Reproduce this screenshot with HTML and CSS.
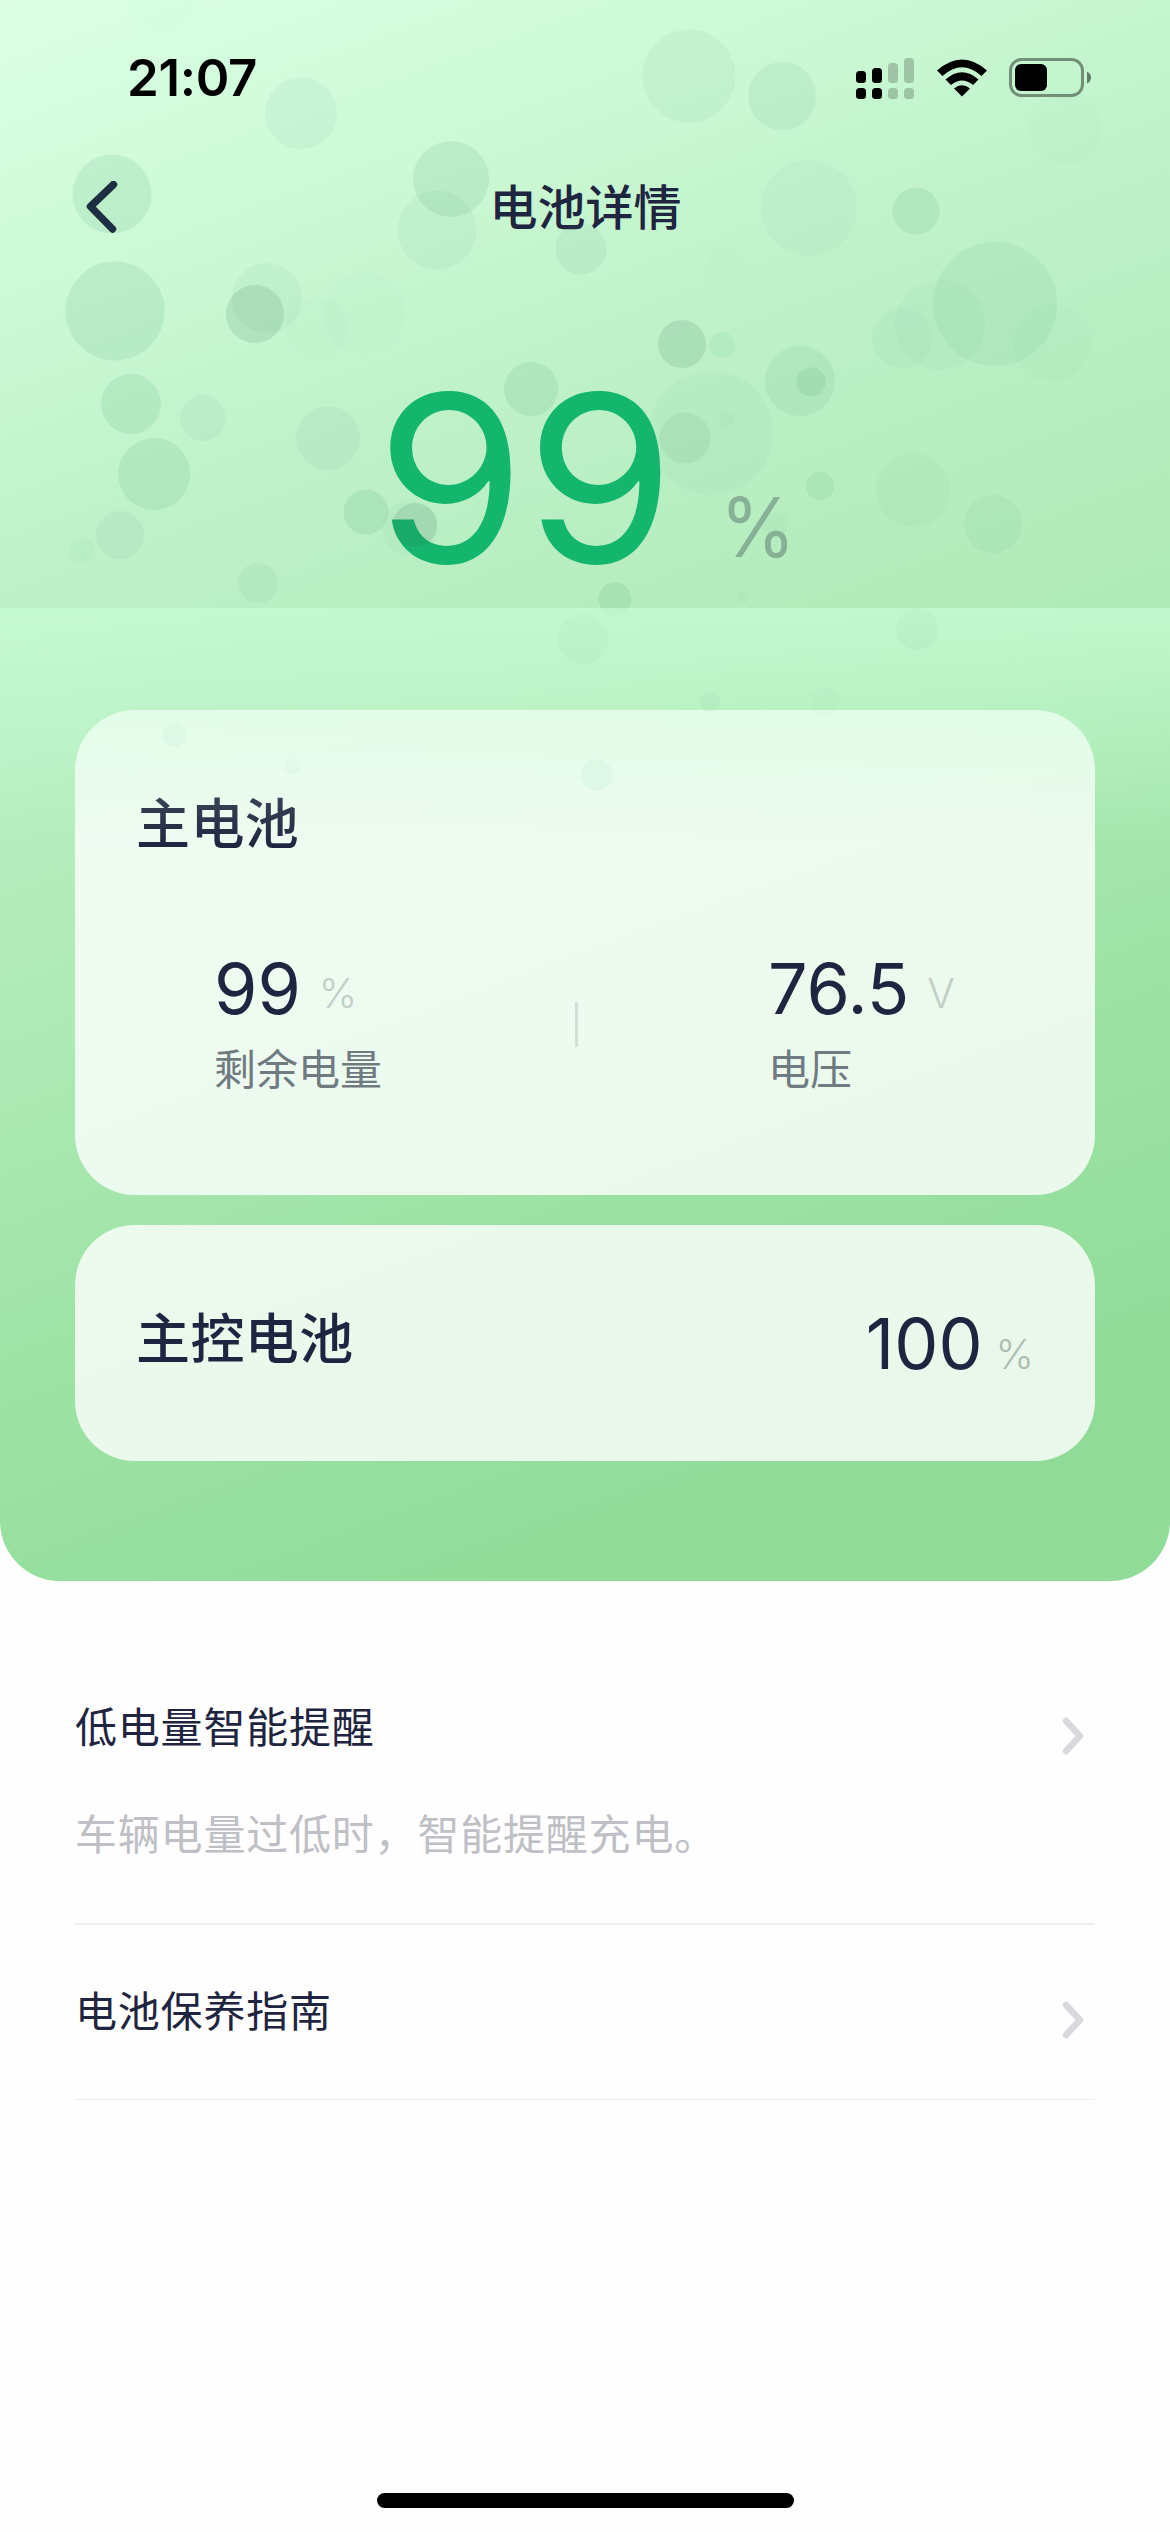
FILE: index.html
```html
<!DOCTYPE html>
<html lang="zh-CN">
<head>
<meta charset="utf-8">
<title>电池详情</title>
<link rel="stylesheet" href="styles.css">
</head>
<body>
<div class="screen">
  <section class="panel">
    <header class="status">
      <span class="time">21:07</span>
      <div class="status-icons">
        <svg class="signal" width="58" height="41" viewBox="0 0 58 41">
          <rect x="0" y="13" width="10" height="12" rx="3.5"/><rect x="16" y="10" width="10" height="15" rx="3.5"/>
          <rect x="0" y="30" width="10" height="11" rx="3.5"/><rect x="16" y="30" width="10" height="11" rx="3.5"/>
          <g opacity=".2"><rect x="32" y="5" width="10" height="20" rx="3.5"/><rect x="48" y="0" width="10" height="25" rx="3.5"/>
          <rect x="32" y="30" width="10" height="11" rx="3.5"/><rect x="48" y="30" width="10" height="11" rx="3.5"/></g>
        </svg>
        <svg class="wifi" width="52" height="38" viewBox="0 0 52 38">
          <path d="M1 11.5Q26-10.500 51 11.500L45.500 17Q26-.5 6.500 17Z"/>
          <path d="M9.500 20.500Q26 6 42.500 20.500L37 26Q26 17 15 26Z"/>
          <path d="M18 29.500Q26 23 34 29.500L26 37.500Z"/>
        </svg>
        <svg class="battery" width="84" height="40" viewBox="0 0 84 40">
          <rect x="1.500" y="1.500" width="72" height="36" rx="11" fill="none" stroke="#000" stroke-opacity=".42" stroke-width="3"/>
          <rect x="6" y="6" width="32" height="27" rx="6"/>
          <path d="M78 13.500Q82 15.500 82 19.500Q82 23.500 78 25.500Z" opacity=".5"/>
        </svg>
      </div>
    </header>
    <nav class="nav">
      <svg class="back" width="32" height="52" viewBox="0 0 32 52"><path d="M27.500 3.500L4.500 25.500L26.500 48" fill="none" stroke="#1f2540" stroke-width="7.500" stroke-linecap="round" stroke-linejoin="round"/></svg>
      <h1 class="title">电池详情</h1>
    </nav>
    <div class="hero"><span class="level">99</span><span class="level-unit">%</span></div>
    <div class="cards">
      <article class="card card-main">
        <h2 class="card-title">主电池</h2>
        <div class="metrics">
          <div class="metric">
            <div class="reading"><span class="value">99</span><span class="unit">%</span></div>
            <div class="label">剩余电量</div>
          </div>
          <i class="separator"></i>
          <div class="metric metric-voltage">
            <div class="reading"><span class="value">76.5</span><span class="unit">V</span></div>
            <div class="label">电压</div>
          </div>
        </div>
      </article>
      <article class="card card-control">
        <h2 class="card-title">主控电池</h2>
        <div class="reading"><span class="value">100</span><span class="unit">%</span></div>
      </article>
    </div>
    <svg class="bubbles" width="1170" height="850" viewBox="0 0 1170 850">
      <g fill="#258a5c" fill-opacity=".1">
        <circle cx="112" cy="194" r="39.500"/><circle cx="115" cy="311" r="49.500"/>
        <circle cx="451" cy="179" r="38"/><circle cx="531" cy="389" r="27"/>
        <circle cx="131" cy="404" r="30"/><circle cx="154" cy="474" r="36"/>
        <circle cx="366" cy="512" r="22.500"/><circle cx="916" cy="211" r="23.500"/>
        <circle cx="995" cy="304" r="62" fill-opacity=".07"/><circle cx="800" cy="381" r="35" fill-opacity=".08"/>
        <circle cx="811" cy="382" r="14.500"/><circle cx="615" cy="599" r="16.500"/>
        <circle cx="820" cy="486" r="14" fill-opacity=".08"/>
      </g>
      <g fill="#4b8f78" fill-opacity=".06">
        <circle cx="301" cy="113" r="36"/><circle cx="437" cy="230" r="39.500"/>
        <circle cx="267" cy="298" r="35"/><circle cx="581" cy="249" r="25.500" fill-opacity=".08"/>
        <circle cx="203" cy="418" r="23"/><circle cx="328" cy="438" r="32"/>
        <circle cx="120" cy="535" r="24"/><circle cx="258" cy="583" r="20"/>
        <circle cx="689" cy="76" r="46.500"/><circle cx="782" cy="96" r="34" fill-opacity=".09"/>
        <circle cx="993" cy="524" r="29"/><circle cx="917" cy="629" r="21" fill-opacity=".12"/>
        <circle cx="710" cy="702" r="10" fill-opacity=".1"/><circle cx="583" cy="639" r="25" fill-opacity=".1"/>
      </g>
      <g fill="#3ca583" fill-opacity=".045">
        <circle cx="809" cy="208" r="48"/><circle cx="940" cy="325" r="45"/><circle cx="902" cy="338" r="30"/>
        <circle cx="1052" cy="343" r="39" fill-opacity=".025"/><circle cx="711" cy="433" r="62"/>
        <circle cx="722" cy="345" r="13" fill-opacity=".07"/><circle cx="727" cy="420" r="7"/>
        <circle cx="913" cy="490" r="37"/><circle cx="775" cy="525" r="13"/><circle cx="743" cy="597" r="6"/>
        <circle cx="82" cy="550" r="13"/><circle cx="410" cy="528" r="28"/><circle cx="825" cy="702" r="14"/>
        <circle cx="1065" cy="128" r="37" fill-opacity=".02"/><circle cx="317" cy="328" r="31" fill-opacity=".02"/>
        <circle cx="364" cy="313" r="41" fill-opacity=".02"/><circle cx="726" cy="267" r="20" fill-opacity=".015"/>
        <circle cx="161" cy="-3" r="36" fill-opacity=".015"/>
        <circle cx="174" cy="735" r="12" fill-opacity=".06"/><circle cx="293" cy="767" r="8"/><circle cx="597" cy="775" r="16" fill-opacity=".06"/>
      </g>
      <g fill="#356f55" fill-opacity=".14">
        <circle cx="255" cy="314" r="29"/><circle cx="682" cy="344" r="24"/>
        <circle cx="415" cy="525" r="22"/><circle cx="685" cy="438" r="25.500" fill-opacity=".08"/>
      </g>
    </svg>
    <div class="veil"></div>
  </section>
  <main class="list">
    <a class="row row-reminder">
      <span class="row-text"><span class="row-title">低电量智能提醒</span><span class="row-note">车辆电量过低时，智能提醒充电。</span></span>
      <svg class="chevron" width="22" height="38" viewBox="0 0 22 38"><path d="M4 4L18 19L4 34"/></svg>
    </a>
    <a class="row row-guide">
      <span class="row-text"><span class="row-title">电池保养指南</span></span>
      <svg class="chevron" width="22" height="38" viewBox="0 0 22 38"><path d="M4 4L18 19L4 34"/></svg>
    </a>
  </main>
  <div class="home-bar"></div>
</div>
</body>
</html>
```
FILE: styles.css
```css
* { box-sizing: border-box; }
body { margin: 0; background: #fff; font-family: Inter, "Noto Sans CJK SC", sans-serif; color: #1f2540; }
h1, h2 { margin: 0; font-weight: 500; }
.screen { width: 1170px; height: 2532px; display: flex; flex-direction: column; overflow: hidden; background: #fefefe; }
.panel {
  position: relative; height: 1581px; flex: none; overflow: hidden; border-radius: 0 0 60px 60px;
  background: linear-gradient(160deg, #dcffe6 0%, #d0fbda 11%, #c6f6d0 21%, #bdf0c7 31%, #afeab6 51%, #9ce2a4 71%, #90db98 90%);
}
.status { height: 156px; padding: 0 77px 0 127px; display: flex; align-items: center; justify-content: space-between; }
.time { font-size: 51px; font-weight: 600; line-height: 60px; color: #000; letter-spacing: -.3px; }
.status-icons { display: flex; align-items: center; }
.wifi { margin-left: 22px; }
.battery { margin-left: 21px; }
.nav { height: 102px; padding-left: 86px; display: grid; grid-template-columns: 32px 1fr; align-items: center; }
.title { padding: 2px 117px 0 0; font-size: 48px; line-height: 60px; text-align: center; }
.hero { height: 452px; padding: 104px 0 0 376px; display: flex; align-items: flex-start; }
.level { width: 344px; font-size: 233px; line-height: 233px; color: #14b56d; letter-spacing: 1px; transform: scaleX(1.03); transform-origin: left; }
.level-unit { margin-top: 116px; font-size: 82px; line-height: 100px; color: #87b196; font-weight: 400; letter-spacing: 0; transform: scaleX(.94); transform-origin: left; }
.cards { margin: 0 75px; display: flex; flex-direction: column; gap: 30px; }
.card { border-radius: 60px; background: rgba(255, 255, 255, .8); }
.card-title { font-size: 54px; line-height: 70px; letter-spacing: .4px; }
.card-main { height: 485px; padding: 80px 61px 0; }
.metrics { margin-top: 89px; padding-left: 78px; display: flex; align-items: flex-start; }
.metric { flex: none; width: 361px; }
.metric-voltage { width: auto; margin-left: 190px; }
.reading { display: flex; align-items: baseline; }
.value { font-size: 70px; line-height: 80px; letter-spacing: 0; }
.unit { margin-left: 18px; padding-bottom: 4px; font-size: 41px; font-weight: 300; color: #c2cfc6; }
.metric .reading { align-items: flex-end; height: 80px; }
.metric .unit { line-height: 60px; padding-bottom: 6px; }
.label { margin-top: 11px; font-size: 42px; line-height: 60px; color: #6f7b80; }
.separator { flex: none; width: 3px; height: 45px; margin-top: 53px; background: #d3dfd8; }
.card-control { height: 236px; padding: 0 61px; display: flex; align-items: center; justify-content: space-between; }
.card-control .card-title { margin-bottom: 6px; }
.card-control .reading { margin-top: 2px; }
.card-control .unit { margin-left: 13px; color: #aebdb4; }
.bubbles { position: absolute; left: 0; top: 0; }
.veil { position: absolute; left: 0; right: 0; top: 608px; height: 240px; background: linear-gradient(rgba(202, 255, 216, .65), rgba(202, 255, 216, 0)); }
.list { flex: 1; padding: 0 75px; }
.row { display: flex; justify-content: space-between; border-bottom: 2px solid #eeeef0; }
.row-text { display: flex; flex-direction: column; font-size: 42px; line-height: 60px; letter-spacing: .8px; }
.row-reminder { height: 344px; padding: 115px 11px 0 0; }
.row-text { margin-top: 2px; }
.row-note { margin-top: 47px; color: #bfbfc6; }
.row-guide { height: 175px; padding: 55px 11px 0 0; border-bottom-width: 1px; }
.chevron { flex: none; margin-top: 21px; fill: none; stroke: #d9d8dd; stroke-width: 6.500px; stroke-linecap: round; stroke-linejoin: round; }
.home-bar { width: 417px; height: 15px; margin: 0 auto 24px; border-radius: 8px; background: #000; }
```
